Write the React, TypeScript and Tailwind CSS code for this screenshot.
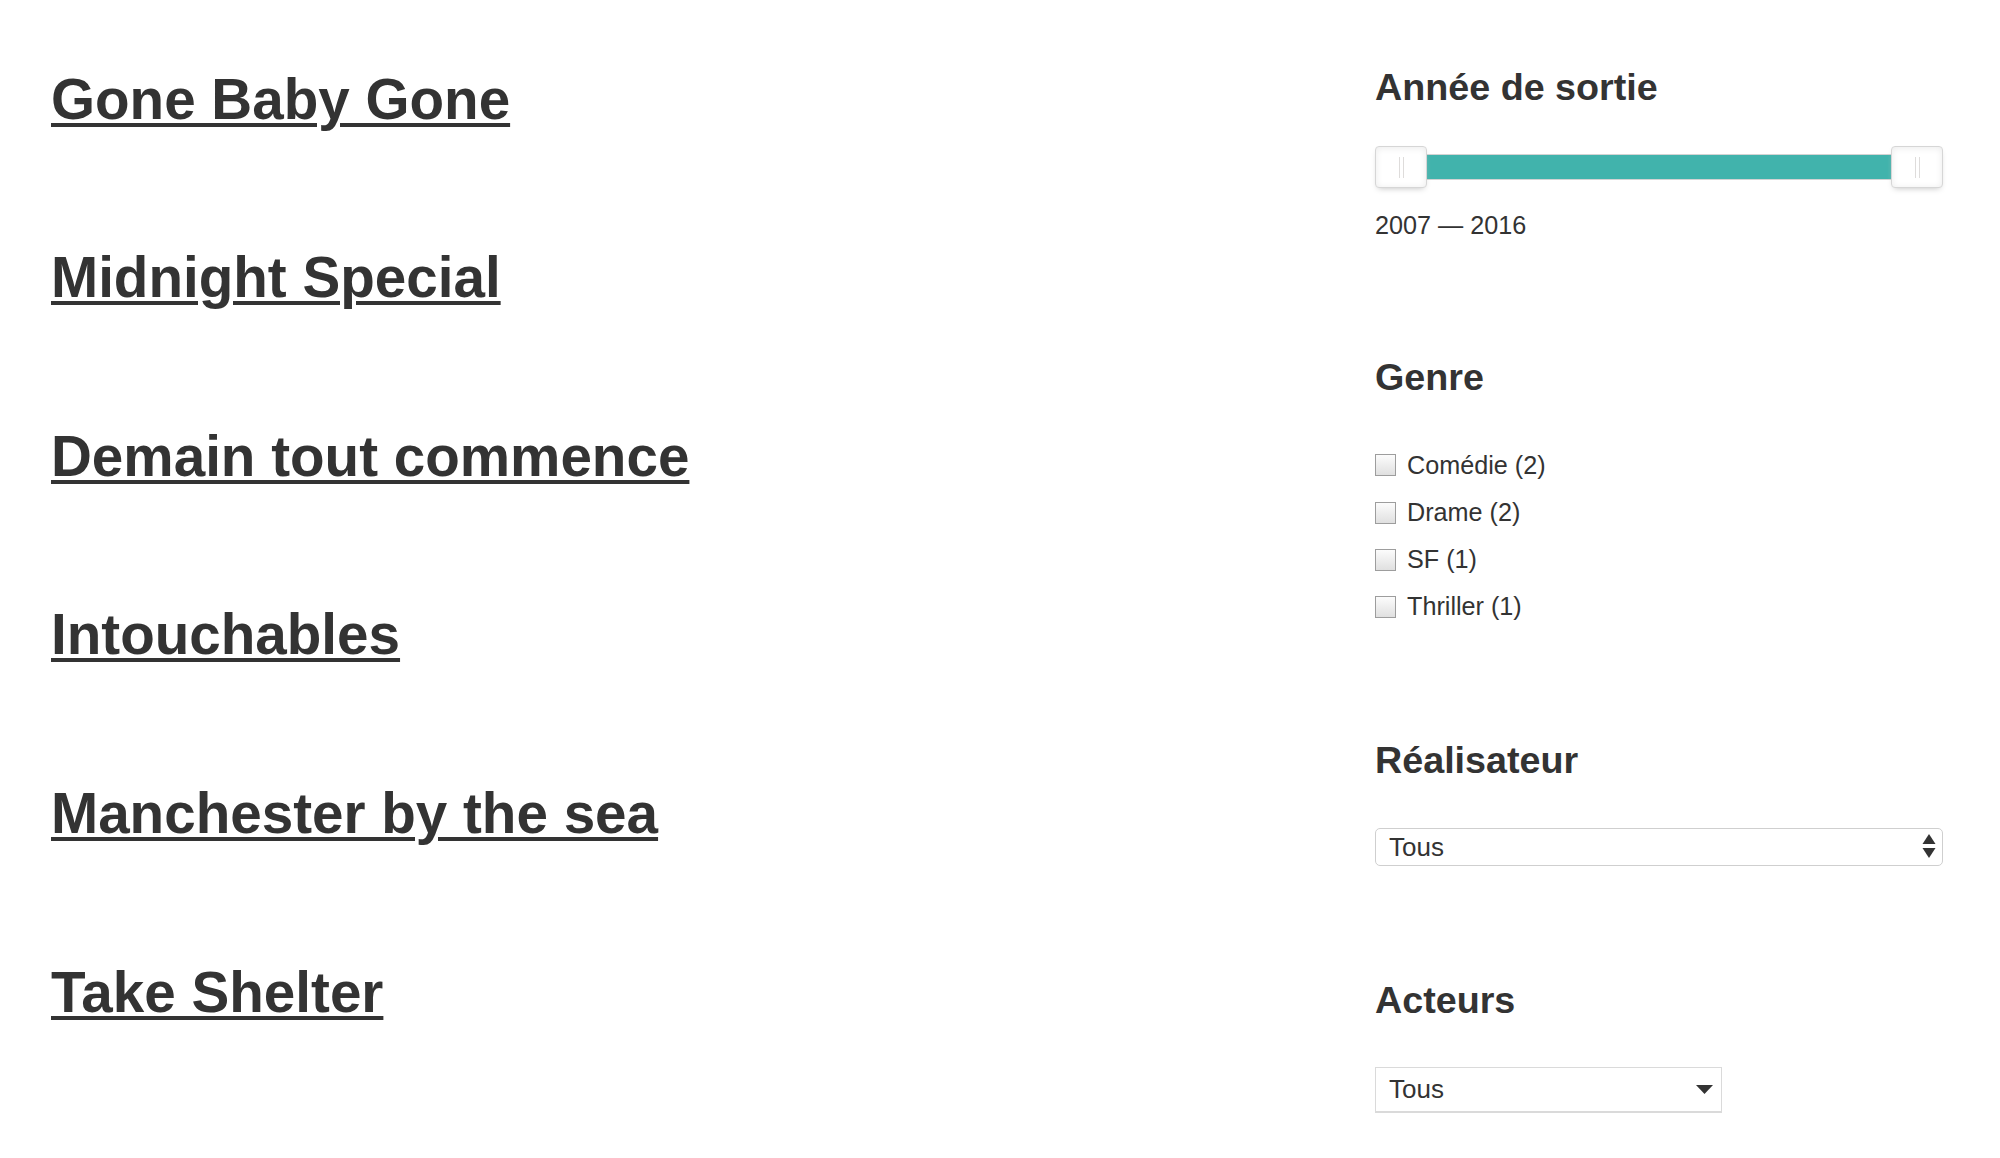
import React from 'react';

const films = [
  'Gone Baby Gone',
  'Midnight Special',
  'Demain tout commence',
  'Intouchables',
  'Manchester by the sea',
  'Take Shelter',
];

const genres = ['Comédie (2)', 'Drame (2)', 'SF (1)', 'Thriller (1)'];

const Handle: React.FC<{ side: 'left' | 'right' }> = ({ side }) => (
  <div
    className={`absolute top-0 ${side === 'left' ? 'left-0' : 'right-0'} w-[52px] h-[42px] bg-white border border-[#d6d6d6] rounded-[4px] shadow-[inset_0_1px_7px_#ebebeb,0_3px_6px_-3px_#bbb] flex items-center justify-center gap-[3px]`}
  >
    <span className="w-px h-[21px] bg-[#dedcdb]" />
    <span className="w-px h-[21px] bg-[#dedcdb]" />
  </div>
);

const RangeSlider: React.FC = () => (
  <div className="relative h-[42px] mt-[39.7px]">
    <div className="absolute left-[4px] right-[4px] top-[8px] h-[26px] bg-[#fafafa] border border-[#d3d3d3] rounded-[4px] overflow-hidden">
      <div className="h-full bg-[#41b3ac]" />
    </div>
    <Handle side="left" />
    <Handle side="right" />
  </div>
);

const Heading: React.FC<{ children: React.ReactNode; className?: string }> = ({ children, className }) => (
  <h3 className={`text-[37.7px] leading-none font-bold text-[#333] ${className ?? ''}`}>{children}</h3>
);

export default function App() {
  return (
    <div className="flex min-h-screen bg-white text-[#333] [font-family:'Liberation_Sans',Arial,sans-serif]">
      {/* film list */}
      <div className="flex-1 pl-[51px] pt-[71.7px] flex flex-col gap-[122px]">
        {films.map((f) => (
          <h1 key={f} className="text-[56.6px] leading-none font-bold">
            <a href="#" className="text-[#333] underline decoration-[3.5px] underline-offset-[4px]">
              {f}
            </a>
          </h1>
        ))}
      </div>

      {/* filters */}
      <div className="w-[568px] mr-[57px] pt-[68.8px] flex flex-col">
        <Heading>Année de sortie</Heading>
        <RangeSlider />
        <div className="mt-[24.7px] text-[25.2px] leading-none">2007 — 2016</div>

        <Heading className="mt-[121.2px]">Genre</Heading>
        <div className="mt-[55.8px] flex flex-col gap-[22px]">
          {genres.map((g) => (
            <label key={g} className="flex items-center gap-[11px] text-[25.2px] leading-none">
              <span className="w-[21px] h-[22px] border border-[#9d9d9d] bg-gradient-to-b from-[#fcfcfc] to-[#e0e0e0]" />
              <span>{g}</span>
            </label>
          ))}
        </div>

        <Heading className="mt-[122.7px]">Réalisateur</Heading>
        <div className="mt-[47.8px] h-[38px] border border-[#cfcfcf] rounded-[5px] flex items-center justify-between pl-[13px] pr-[6px]">
          <span className="text-[26px] leading-none">Tous</span>
          <svg width="14" height="25" viewBox="0 0 14 25" className="text-[#333]">
            <polygon points="7,0 13.5,10 0.5,10" fill="currentColor" />
            <polygon points="0.5,14 13.5,14 7,24" fill="currentColor" />
          </svg>
        </div>

        <Heading className="mt-[116.7px]">Acteurs</Heading>
        <div className="mt-[46.8px] w-[347px] h-[46px] border border-[#dadada] border-b-2 flex items-center justify-between pl-[13px] pr-[8px]">
          <span className="text-[26px] leading-none">Tous</span>
          <svg width="17" height="9" viewBox="0 0 17 9" className="text-[#333]">
            <polygon points="0,0 17,0 8.5,9" fill="currentColor" />
          </svg>
        </div>
      </div>
    </div>
  );
}
